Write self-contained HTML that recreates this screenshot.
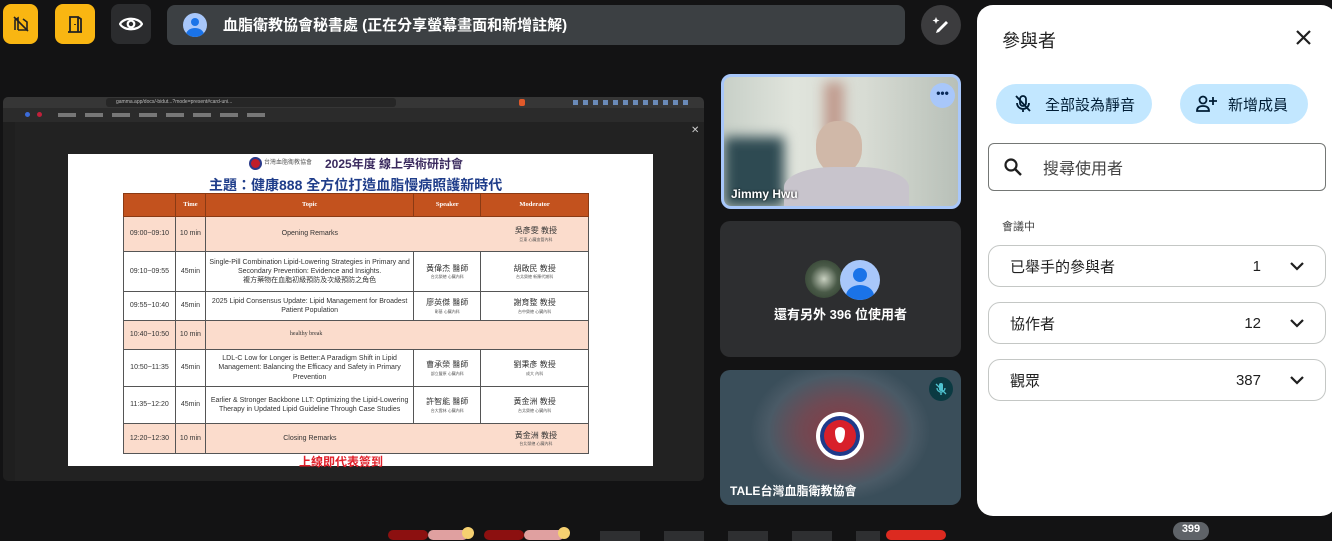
<!DOCTYPE html>
<html><head><meta charset="utf-8"><style>
*{box-sizing:border-box;margin:0;padding:0}
body{width:1332px;height:535px;background:#131314;position:relative;overflow:hidden;font-family:"Liberation Sans","Noto Sans CJK TC",sans-serif;}
.abs{position:absolute}
.ybtn{position:absolute;top:4px;width:35px;height:40px;border-radius:8px;background:#f9b612;display:flex;align-items:center;justify-content:center}
table{border-collapse:collapse;position:absolute;left:123px;top:193px;width:466px;font-family:"Liberation Sans","Noto Sans CJK TC",sans-serif;font-size:7px;color:#333;text-align:center}
td{border:1px solid #555;line-height:1.3}
tr.h td{background:#c3521e;color:#fff;font-family:"Liberation Serif",serif;font-weight:bold;font-size:6.5px;border-color:#8a3a14}
tr.p td{background:#fbdccc}
.sm{font-size:4px;color:#555;display:block}
.nm{font-size:8px;display:block}
.row{position:absolute;left:11px;width:338px;height:42px;border:1px solid #c4c7c5;border-radius:12px;display:flex;align-items:center;font-size:15px;color:#1f1f1f}
.row .t{margin-left:21px;flex:1}
.row .n{width:60px;text-align:right;margin-right:28px}
.row svg{margin-right:20px}
</style></head><body>
<div class="ybtn" style="left:3px"><svg width="18" height="18" viewBox="0 0 18 18"><path d="M3 15V5l3-2v12M6 15h9V7l-4-3" fill="none" stroke="#222" stroke-width="1.6"/><path d="M2 2l14 14" stroke="#222" stroke-width="1.6"/></svg></div>
<div class="ybtn" style="left:55px;width:40px"><svg width="18" height="20" viewBox="0 0 18 20"><path d="M4 18V3h8v15M2 18h14M12 3l3 2v13M9 10v1" fill="none" stroke="#222" stroke-width="1.8"/></svg></div>
<div class="abs" style="left:111px;top:4px;width:40px;height:40px;border-radius:8px;background:#2b2c2e;display:flex;align-items:center;justify-content:center"><svg width="24" height="16" viewBox="0 0 24 16"><path d="M1 8C5 1 19 1 23 8C19 15 5 15 1 8Z" fill="none" stroke="#fff" stroke-width="2.2"/><circle cx="12" cy="8" r="3.3" fill="none" stroke="#fff" stroke-width="2.2"/></svg></div>
<div class="abs" style="left:167px;top:5px;width:738px;height:40px;border-radius:8px;background:#3c4043"></div>
<div class="abs" style="left:183px;top:13px;width:24px;height:24px;border-radius:50%;background:#a8c7fa;overflow:hidden"><div class="abs" style="left:8px;top:5px;width:8px;height:8px;border-radius:50%;background:#1a73e8"></div><div class="abs" style="left:3px;top:15px;width:18px;height:14px;border-radius:50%;background:#1a73e8"></div></div>
<div class="abs" style="left:223px;top:14px;color:#fff;font-size:15px;font-weight:bold">血脂衛教協會秘書處 (正在分享螢幕畫面和新增註解)</div>
<div class="abs" style="left:921px;top:5px;width:40px;height:40px;border-radius:50%;background:#3c3c3e;display:flex;align-items:center;justify-content:center"><svg width="20" height="20" viewBox="0 0 20 20"><path d="M8 17l9-9-2-2-9 9-1 3z" fill="#fff"/><path d="M5 2l1 2.5 2.5 1-2.5 1-1 2.5-1-2.5-2.5-1 2.5-1z" fill="#fff"/></svg></div>

<div class="abs" style="left:3px;top:97px;width:701px;height:384px;background:#1f1f1f;border-radius:5px;overflow:hidden">
 <div class="abs" style="left:0;top:0;width:701px;height:11px;background:#363636"></div>
 <div class="abs" style="left:103px;top:1px;width:290px;height:9px;background:#262626;border-radius:3px;color:#bbb;font-size:5px;line-height:9px;padding-left:10px">gamma.app/docs/-bidut...?mode=present#card-uni...</div>
 <div class="abs" style="left:516px;top:2px;width:6px;height:7px;background:#e0592a;border-radius:2px"></div>
 <div class="abs" style="left:570px;top:3px;width:120px;height:5px;background:repeating-linear-gradient(90deg,#6a8ab8 0 5px,transparent 5px 10px)"></div>
 <div class="abs" style="left:0;top:11px;width:701px;height:14px;background:#2b2b2b"></div>
 <div class="abs" style="left:22px;top:15px;width:5px;height:5px;border-radius:50%;background:#3b6bd8"></div>
 <div class="abs" style="left:34px;top:15px;width:5px;height:5px;border-radius:50%;background:#c0203a"></div>
 <div class="abs" style="left:55px;top:16px;width:210px;height:4px;background:repeating-linear-gradient(90deg,#777 0 18px,transparent 18px 27px)"></div>
 <div class="abs" style="left:12px;top:25px;width:689px;height:359px;background:#222"></div>
 <div class="abs" style="left:688px;top:28px;color:#ccc;font-size:10px">✕</div>
 <div class="abs" style="left:65px;top:57px;width:585px;height:312px;background:#fff"></div>
</div>
<div class="abs" style="left:249px;top:157px;width:13px;height:13px;border-radius:50%;background:#c01d2a;border:2px solid #2a3a8a"></div>
<div class="abs" style="left:264px;top:157px;font-size:6px;color:#555">台灣血脂衛教協會</div>
<div class="abs" style="left:325px;top:155px;font-size:12px;font-weight:bold;color:#3a2a5e">2025年度 線上學術研討會</div>
<div class="abs" style="left:209px;top:175px;font-size:14px;font-weight:bold;color:#1f3d8a">主題：健康888 全方位打造血脂慢病照護新時代</div>
<table>
<colgroup><col style="width:52px"><col style="width:30px"><col style="width:209px"><col style="width:67px"><col style="width:108px"></colgroup>
<tr class="h" style="height:23px"><td></td><td>Time</td><td>Topic</td><td>Speaker</td><td>Moderator</td></tr>
<tr class="p" style="height:35px"><td>09:00~09:10</td><td>10 min</td><td style="border-right:none">Opening Remarks</td><td colspan="2" style="border-left:none;padding-left:70px"><span class="nm">吳彥雯 教授</span><span class="sm">亞東 心臟血管內科</span></td></tr>
<tr style="height:40px"><td>09:10~09:55</td><td>45min</td><td>Single-Pill Combination Lipid-Lowering Strategies in Primary and Secondary Prevention: Evidence and Insights.<br>複方藥物在血脂初級預防及次級預防之角色</td><td><span class="nm">黃偉杰 醫師</span><span class="sm">台北榮總 心臟內科</span></td><td><span class="nm">胡啟民 教授</span><span class="sm">台北榮總 新陳代謝科</span></td></tr>
<tr style="height:29px"><td>09:55~10:40</td><td>45min</td><td>2025 Lipid Consensus Update: Lipid Management for Broadest Patient Population</td><td><span class="nm">廖英傑 醫師</span><span class="sm">彰基 心臟內科</span></td><td><span class="nm">謝育整 教授</span><span class="sm">台中榮總 心臟內科</span></td></tr>
<tr class="p" style="height:29px"><td>10:40~10:50</td><td>10 min</td><td colspan="3" style="text-align:left;padding-left:84px;font-family:'Liberation Serif',serif;font-size:6px">healthy break</td></tr>
<tr style="height:37px"><td>10:50~11:35</td><td>45min</td><td>LDL-C Low for Longer is Better:A Paradigm Shift in Lipid Management: Balancing the Efficacy and Safety in Primary Prevention</td><td><span class="nm">曹承榮 醫師</span><span class="sm">部立豐原 心臟內科</span></td><td><span class="nm">劉秉彥 教授</span><span class="sm">成大 內科</span></td></tr>
<tr style="height:37px"><td>11:35~12:20</td><td>45min</td><td>Earlier &amp; Stronger Backbone LLT: Optimizing the Lipid-Lowering Therapy in Updated Lipid Guideline Through Case Studies</td><td><span class="nm">許智能 醫師</span><span class="sm">台大雲林 心臟內科</span></td><td><span class="nm">黃金洲 教授</span><span class="sm">台北榮總 心臟內科</span></td></tr>
<tr class="p" style="height:30px"><td>12:20~12:30</td><td>10 min</td><td style="border-right:none">Closing Remarks</td><td colspan="2" style="border-left:none;padding-left:70px"><span class="nm">黃金洲 教授</span><span class="sm">台北榮總 心臟內科</span></td></tr>
</table>
<div class="abs" style="left:299px;top:453px;font-size:12px;font-weight:bold;color:#e0202a">上線即代表簽到</div>

<div class="abs" style="left:721px;top:74px;width:240px;height:135px;border-radius:10px;border:3px solid #a8c7fa;overflow:hidden;background:linear-gradient(90deg,#c8d0c8 0,#e0e4dc 30%,#d8dcd4 60%,#b8c0b8 100%)">
 <div class="abs" style="left:0;top:60px;width:60px;height:70px;background:#2e4a52;filter:blur(6px)"></div>
 <div class="abs" style="left:100px;top:5px;width:20px;height:60px;background:#b07060;filter:blur(6px);opacity:.6"></div>
 <div class="abs" style="left:92px;top:44px;width:46px;height:52px;border-radius:45%;background:#d0b8a8"></div>
 <div class="abs" style="left:60px;top:90px;width:125px;height:50px;border-radius:40% 40% 0 0;background:#c8c4cc"></div>
 <div class="abs" style="left:206px;top:6px;width:25px;height:25px;border-radius:50%;background:#a8c7fa;color:#0a2a5a;font-size:12px;font-weight:bold;text-align:center;line-height:20px">•••</div>
 <div class="abs" style="left:7px;top:110px;color:#fff;font-size:12px;font-weight:bold;text-shadow:0 0 2px #000">Jimmy Hwu</div>
</div>
<div class="abs" style="left:720px;top:221px;width:241px;height:136px;border-radius:10px;background:#2d2e30">
 <div class="abs" style="left:85px;top:39px;width:38px;height:38px;border-radius:50%;background:radial-gradient(circle,#c8d0c0 0,#4a5a48 50%,#2a3a2a 100%)"></div>
 <div class="abs" style="left:120px;top:39px;width:40px;height:40px;border-radius:50%;background:#a8c7fa;overflow:hidden"><div class="abs" style="left:13px;top:8px;width:14px;height:14px;border-radius:50%;background:#1a73e8"></div><div class="abs" style="left:6px;top:25px;width:28px;height:22px;border-radius:50%;background:#1a73e8"></div></div>
 <div class="abs" style="left:0;top:83px;width:241px;text-align:center;color:#fff;font-size:13px;font-weight:bold">還有另外 396 位使用者</div>
</div>
<div class="abs" style="left:720px;top:370px;width:241px;height:135px;border-radius:10px;background:radial-gradient(ellipse 90px 70px at 50% 45%,#8a3a44 0,#6e4a54 45%,#4a5a66 80%,#3a4e5a 100%)">
 <div class="abs" style="left:96px;top:42px;width:48px;height:48px;border-radius:50%;background:#fff"></div>
 <div class="abs" style="left:100px;top:46px;width:40px;height:40px;border-radius:50%;background:#1f3a8a"></div>
 <div class="abs" style="left:104px;top:50px;width:32px;height:32px;border-radius:50%;background:#d8202a"></div>
 <div class="abs" style="left:115px;top:57px;width:10px;height:16px;border-radius:50% 50% 50% 50%/30% 30% 70% 70%;background:#fff"></div>
 <div class="abs" style="left:209px;top:7px;width:24px;height:24px;border-radius:50%;background:#0b3a42;display:flex;align-items:center;justify-content:center"><svg width="14" height="14" viewBox="0 0 14 14"><rect x="5" y="1" width="4" height="8" rx="2" fill="#4fc3d0"/><path d="M3 6a4 4 0 008 0M7 10v3M2 2l10 10" stroke="#4fc3d0" stroke-width="1.3" fill="none"/></svg></div>
 <div class="abs" style="left:10px;top:112px;color:#fff;font-size:12px;font-weight:bold">TALE台灣血脂衛教協會</div>
</div>

<div class="abs" style="left:388px;top:530px;width:40px;height:10px;border-radius:8px;background:#8c1010"></div>
<div class="abs" style="left:428px;top:530px;width:40px;height:10px;border-radius:8px;background:#e0a0a0"></div>
<div class="abs" style="left:462px;top:527px;width:12px;height:12px;border-radius:50%;background:#f5d070"></div>
<div class="abs" style="left:484px;top:530px;width:40px;height:10px;border-radius:8px;background:#8c1010"></div>
<div class="abs" style="left:524px;top:530px;width:40px;height:10px;border-radius:8px;background:#e0a0a0"></div>
<div class="abs" style="left:558px;top:527px;width:12px;height:12px;border-radius:50%;background:#f5d070"></div>
<div class="abs" style="left:600px;top:531px;width:280px;height:10px;background:repeating-linear-gradient(90deg,#2e2f31 0 40px,transparent 40px 64px)"></div>
<div class="abs" style="left:886px;top:530px;width:60px;height:10px;border-radius:8px;background:#dc2a20"></div>
<div class="abs" style="left:1173px;top:522px;width:36px;height:18px;border-radius:9px;background:#5f6368;color:#fff;font-size:11px;font-weight:bold;text-align:center;line-height:15px">399</div>

<div class="abs" style="left:977px;top:5px;width:360px;height:511px;background:#fff;border-radius:16px">
 <div class="abs" style="left:25px;top:22px;font-size:18px;color:#1f1f1f">參與者</div>
 <svg class="abs" style="left:318px;top:24px" width="17" height="17" viewBox="0 0 17 17"><path d="M2 2l13 13M15 2L2 15" stroke="#1f1f1f" stroke-width="2.2"/></svg>
 <div class="abs" style="left:19px;top:79px;width:156px;height:40px;border-radius:20px;background:#c2e7ff;display:flex;align-items:center;font-size:15px;color:#001d35"><svg style="margin:0 13px 0 18px" width="18" height="20" viewBox="0 0 18 20"><rect x="6" y="2" width="6" height="10" rx="3" fill="none" stroke="#001d35" stroke-width="1.8"/><path d="M3 9a6 6 0 0012 0M9 15v3M2 2l14 15" stroke="#001d35" stroke-width="1.8" fill="none"/></svg>全部設為靜音</div>
 <div class="abs" style="left:203px;top:79px;width:128px;height:40px;border-radius:20px;background:#c2e7ff;display:flex;align-items:center;font-size:15px;color:#001d35"><svg style="margin:0 10px 0 16px" width="22" height="18" viewBox="0 0 22 18"><circle cx="7" cy="5" r="3.5" fill="none" stroke="#001d35" stroke-width="1.8"/><path d="M1 16c0-4 3-5 6-5s6 1 6 5zM17 2v8M13 6h8" stroke="#001d35" stroke-width="1.8" fill="none"/></svg>新增成員</div>
 <div class="abs" style="left:11px;top:138px;width:338px;height:48px;border:1px solid #747775;border-radius:6px;font-size:16px;color:#444;display:flex;align-items:center"><svg style="margin:0 20px 0 14px" width="20" height="20" viewBox="0 0 20 20"><circle cx="8" cy="8" r="5.5" fill="none" stroke="#1f1f1f" stroke-width="2.2"/><path d="M12 12l6 6" stroke="#1f1f1f" stroke-width="2.4"/></svg>搜尋使用者</div>
 <div class="abs" style="left:25px;top:213px;font-size:11px;color:#444">會議中</div>
 <div class="row" style="top:240px"><span class="t">已舉手的參與者</span><span class="n">1</span><svg width="16" height="10" viewBox="0 0 16 10"><path d="M2 2l6 6 6-6" stroke="#1f1f1f" stroke-width="2.2" fill="none"/></svg></div>
 <div class="row" style="top:297px"><span class="t">協作者</span><span class="n">12</span><svg width="16" height="10" viewBox="0 0 16 10"><path d="M2 2l6 6 6-6" stroke="#1f1f1f" stroke-width="2.2" fill="none"/></svg></div>
 <div class="row" style="top:354px"><span class="t">觀眾</span><span class="n">387</span><svg width="16" height="10" viewBox="0 0 16 10"><path d="M2 2l6 6 6-6" stroke="#1f1f1f" stroke-width="2.2" fill="none"/></svg></div>
</div>
</body></html>
